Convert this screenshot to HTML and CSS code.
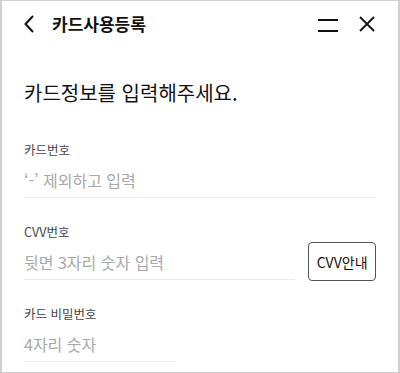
FILE: index.html
```html
<!DOCTYPE html>
<html lang="ko">
<head>
    <meta charset="UTF-8">
    <meta name="viewport" content="width=device-width, initial-scale=1.0">
    <title>카드사용등록</title>
    <link rel="stylesheet" href="styles.css">
</head>
<body>
    <div class="frame">
        <div class="header">
            <svg class="back" width="10" height="18" viewBox="0 0 10 18">
                <path d="M9 1 L1.5 9 L9 17" fill="none" stroke="#111" stroke-width="2"/>
            </svg>
            <h1 class="title">카드사용등록</h1>
            <div class="spacer"></div>
            <svg class="menu" width="20" height="14" viewBox="0 0 20 14">
                <path d="M0 2 H20 M0 13 H20" stroke="#111" stroke-width="2"/>
            </svg>
            <svg class="close" width="16" height="16" viewBox="0 0 16 16">
                <path d="M1 1 L15 15 M15 1 L1 15" stroke="#111" stroke-width="1.8"/>
            </svg>
        </div>
        <div class="content">
            <h2 class="heading">카드정보를 입력해주세요.</h2>
            <div class="field">
                <label class="label">카드번호</label>
                <input class="input" type="text" placeholder="‘-’ 제외하고 입력">
            </div>
            <div class="field">
                <label class="label">CVV번호</label>
                <div class="row">
                    <input class="input cvv" type="text" placeholder="뒷면 3자리 숫자 입력">
                    <button class="guide">CVV안내</button>
                </div>
            </div>
            <div class="field">
                <label class="label">카드 비밀번호</label>
                <input class="input pin" type="password" placeholder="4자리 숫자">
            </div>
        </div>
    </div>
</body>
</html>
```

FILE: styles.css
```css
html, body{
    margin: 0;
    padding: 0;
    background-color: white;
}
body{
    font-family: "Noto Sans CJK KR", "Noto Sans", sans-serif;
    color: #111;
}
.frame{
    box-sizing: border-box;
    width: 400px;
    height: 373px;
    border: 1px solid #cfcfcf;
    border-left: 2px solid #cfcfcf;
    border-right: 2px solid #cfcfcf;
    overflow: hidden;
}
.header{
    display: flex;
    align-items: center;
    height: 45px;
    padding: 0 23px 0 22px;
}
.back{
    display: block;
}
.title{
    margin: 0 0 0 18px;
    font-size: 17px;
    font-weight: 700;
    line-height: 24px;
}
.spacer{
    flex: 1;
}
.menu{
    display: block;
    margin-top: 2px;
}
.close{
    display: block;
    margin-left: 21px;
    margin-top: 1px;
}
.content{
    padding: 0 22px;
}
.heading{
    margin: 33px 0 0 0;
    font-size: 20px;
    font-weight: 400;
    line-height: 28px;
}
.field{
    margin-top: 34px;
}
.field + .field{
    margin-top: 25px;
}
.label{
    display: block;
    font-size: 12.5px;
    line-height: 18px;
    color: #444;
}
.input{
    display: block;
    box-sizing: border-box;
    width: 352px;
    margin-top: 9px;
    padding: 0 0 5px 0;
    height: 30px;
    border: none;
    border-bottom: 1px solid #ebebeb;
    font-family: inherit;
    font-size: 16px;
    line-height: 24px;
    color: #111;
    outline: none;
    background: transparent;
}
.input::placeholder{
    color: #a8a8a8;
}
.row{
    display: flex;
    align-items: flex-end;
}
.cvv{
    width: 272px;
}
.guide{
    box-sizing: border-box;
    width: 68px;
    height: 39px;
    margin-left: 13px;
    margin-bottom: -1px;
    border: 1px solid #555;
    border-radius: 4px;
    background: white;
    font-family: inherit;
    font-size: 14px;
    color: #111;
    padding: 0;
}
.pin{
    width: 152px;
}
```
